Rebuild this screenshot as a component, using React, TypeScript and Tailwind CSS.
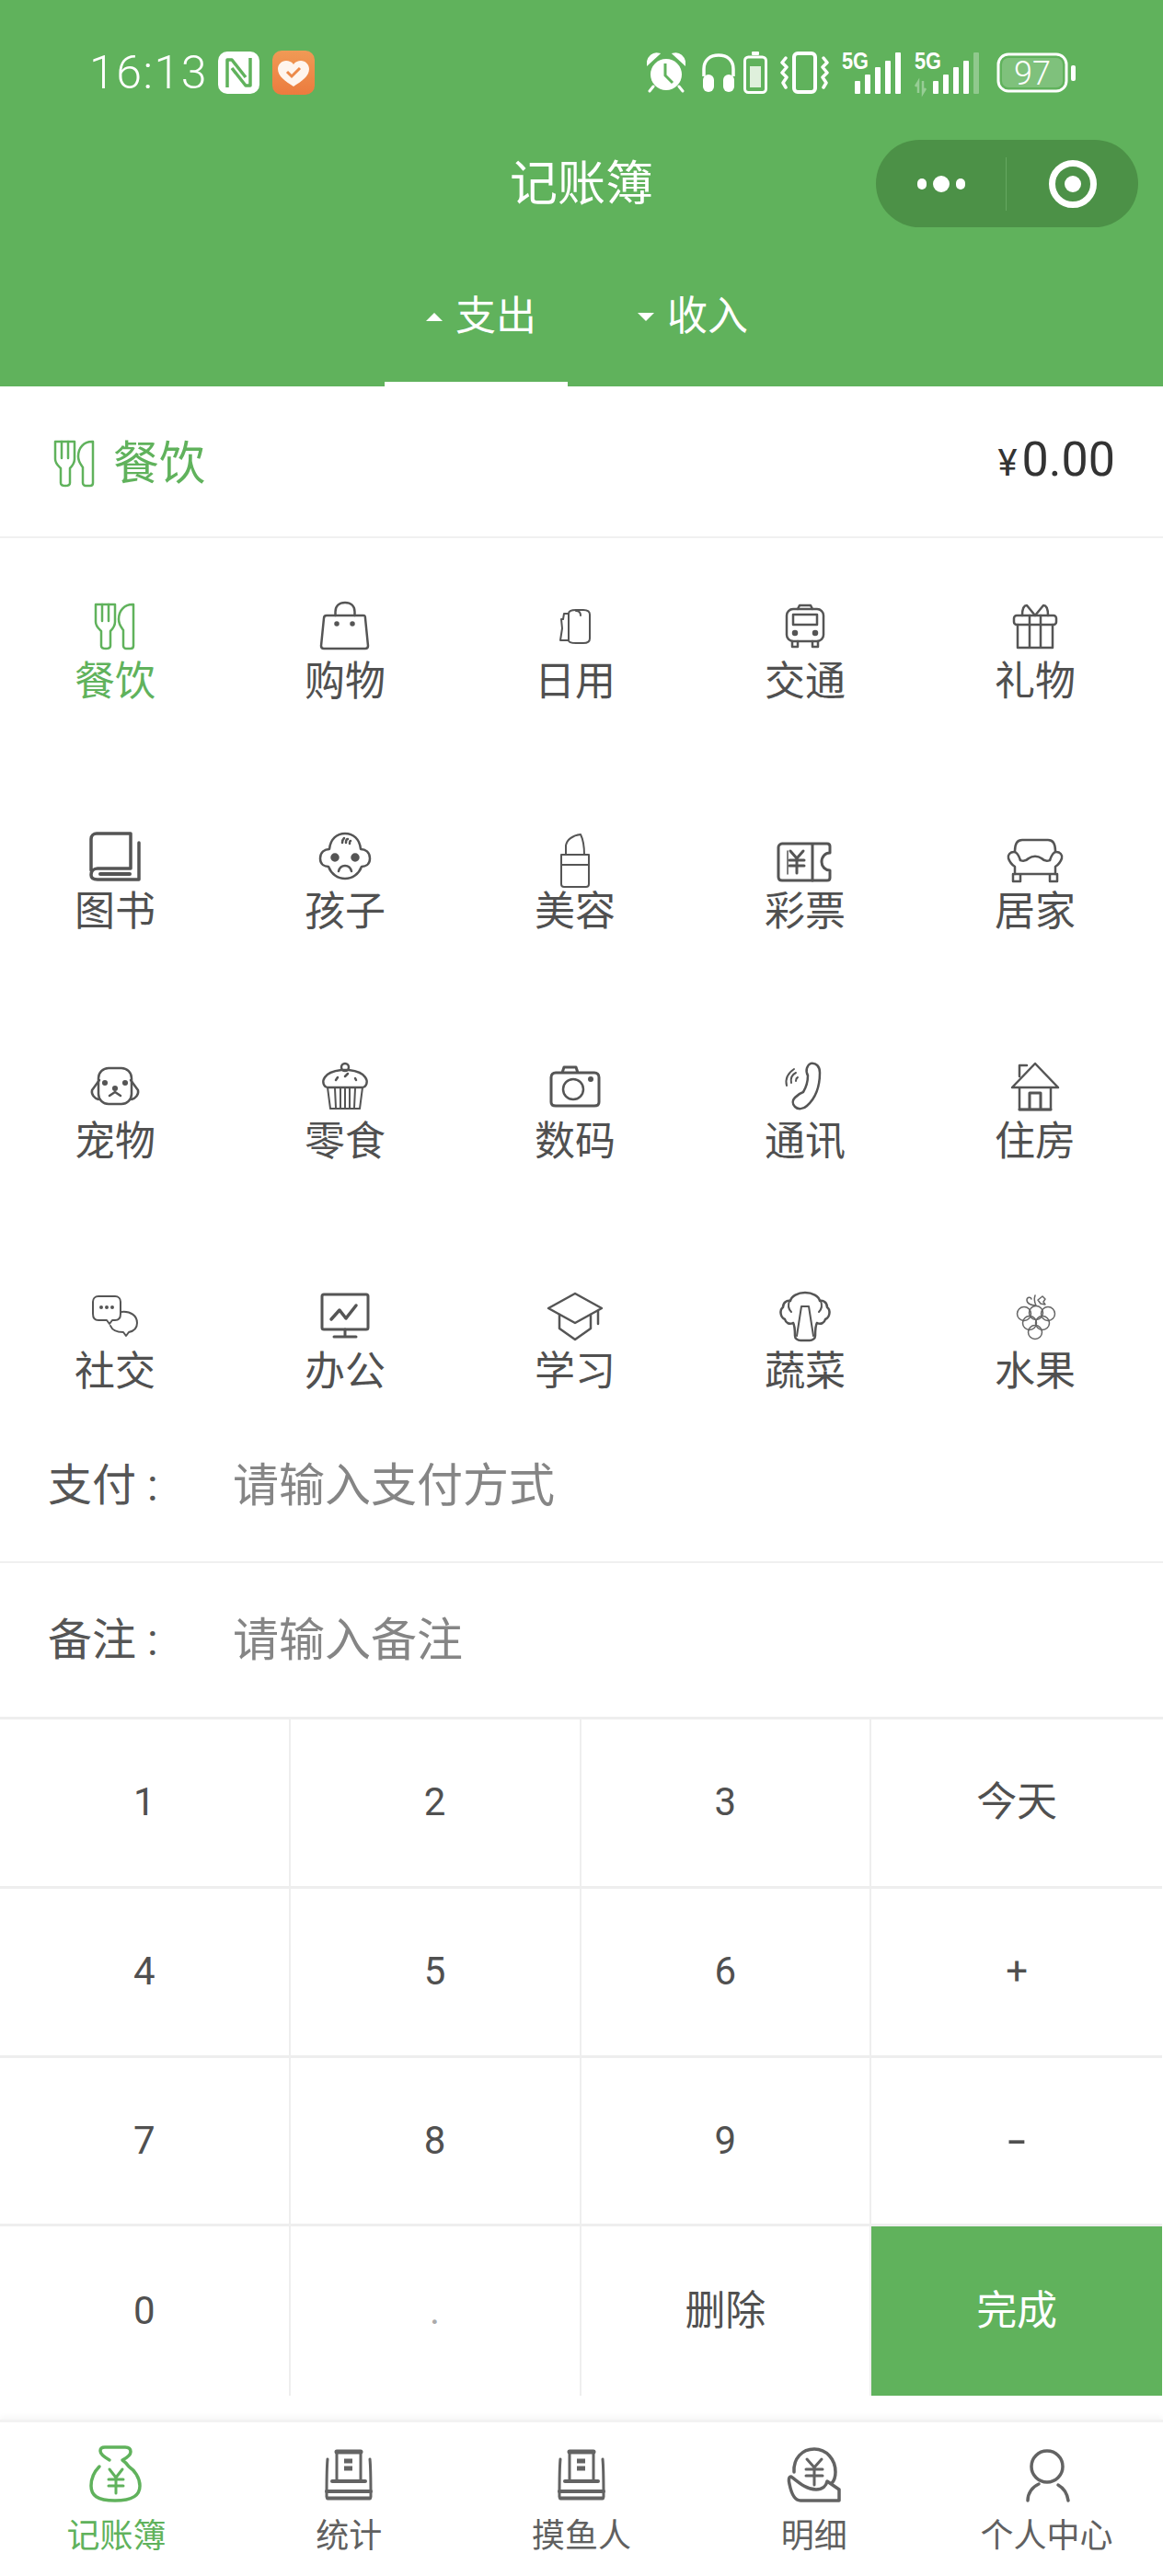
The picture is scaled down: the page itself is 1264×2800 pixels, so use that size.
import React from "react";

const G = "#60b25c";
type IP = { c?: string };
const Svg = ({ c = "#555", w = 60, h = 52, sw = 2.5, vb, children }: any) => (
  <svg width={w} height={h} viewBox={vb || `0 0 ${w} ${h}`} fill="none" stroke={c} strokeWidth={sw} strokeLinecap="round" strokeLinejoin="round" className="block overflow-visible">
    {children}
  </svg>
);

const Fork = ({ c = "#555" }: IP) => (
  <Svg c={c}>
    <path d="M9 2h21v19c0 5-3 8-5 10v16c0 2-2 3-5 3s-5-1-5-3V31c-2-2-6-5-6-10z" />
    <path d="M16 2v18M23 2v18" />
    <path d="M50 2h-1c-9 0-15 7-15 16 0 6 3 9 5 12v17c0 2 2 3 3 3h5c2 0 3-1 3-3z" />
  </Svg>
);
const Bag = () => (
  <Svg>
    <path d="M10 14h40c2 0 2 1 2 3l3 30c0 2-1 3-3 3H7c-2 0-3-1-3-3l3-30c0-2 1-3 3-3z" />
    <path d="M19.500 14V10c0-6 4-10 10.500-10s10.500 4 10.500 10v4" />
    <circle cx="21" cy="23" r="1.500" fill="#555" /><circle cx="38" cy="23" r="1.500" fill="#555" />
  </Svg>
);
const Roll = () => (
  <Svg sw={2}>
    <path d="M23 12c0-3 3-4 8-4h8c5 0 7 2 7 5v26c0 3-2 5-7 5h-8c-5 0-8-1-8-3V12zM23 12h-5l-1 6h-2l1 10-2 13h9" />
    <path d="M31 9c3 0 5 2 5 5" />
  </Svg>
);
const Bus = () => (
  <Svg sw={2.500}>
    <path d="M22 7l2-4h12l2 4M16 42v6h6v-6M38 42v6h6v-6" />
    <rect x="10" y="7" width="40" height="35" rx="7" />
    <rect x="17" y="13" width="26" height="11" />
    <circle cx="19" cy="33" r="2" fill="#555" /><circle cx="41" cy="33" r="2" fill="#555" />
  </Svg>
);
const Gift = () => (
  <Svg sw={2.500}>
    <rect x="7" y="14" width="46" height="10" rx="3" />
    <path d="M11 24v25h38V24M24 14v35M36 14v35M30 14L21 3c-3 0-5 3-5 11M30 14l9-11c3 0 5 3 5 11" />
  </Svg>
);
const Book = () => (
  <Svg sw={3.500}>
    <path d="M4 41V7c0-4 3-6 6-6h37v38H11c-4 0-7 3-7 7s3 5 7 5h45V11" />
    <path d="M14 45h32" strokeWidth={4} />
  </Svg>
);
const Baby = () => (
  <Svg sw={2.500}>
    <path d="M13 18C14 7 21 1 30 1s16 6 17 17c5 0 10 3 10 10s-5 9-9 9c-3 8-10 13-18 13s-15-5-18-13c-4 0-9-2-9-9s5-10 10-10z" />
    <circle cx="19" cy="27" r="3.500" fill="#555" /><circle cx="41" cy="27" r="3.500" fill="#555" />
    <path d="M23 42c1-4 4-6 7-6s6 2 7 6M27 11c0-3 1-4 2-5M31 11c0-3 1-4 2-4M35 12c0-2 0-3 1-3" />
  </Svg>
);
const Lip = () => (
  <Svg sw={2}>
    <path d="M20 24V14C21 8 27 3 36 2c3 6 4 15 4 22M15 24h30v11H15zM15 35v21c0 2 1 3 3 3h24c2 0 3-1 3-3V35" />
  </Svg>
);
const Ticket = () => (
  <Svg sw={3}>
    <path d="M5 12h49c2 0 3 1 3 3v7c-5 0-9 4-9 10 0 5 4 9 9 9v8c0 2-1 3-3 3H5c-2 0-4-1-4-4V16c0-2 2-4 4-4z" />
    <path d="M38 13v39" />
    <path d="M11 20v25" strokeWidth={1.500} />
    <path d="M14 20l7 8 7-8M13 30h16M13 36h16M21 28v16" />
  </Svg>
);
const Sofa = () => (
  <Svg>
    <path d="M8 20C8 12 11 8 16 8h28c5 0 8 4 8 12" />
    <path d="M14 30c-2-6-4-9-7-9-4 0-7 3-6 7 1 3 4 7 7 9v8M46 30c2-6 4-9 7-9 4 0 7 3 6 7-1 3-4 7-7 9v8" />
    <path d="M14 30c4 2 7 0 9-2 4-3 10-3 14 0 2 2 5 4 9 2" />
    <path d="M8 45h44M6 45v8h8v-8M46 45v8h8v-8" />
  </Svg>
);
const Dog = () => (
  <Svg>
    <rect x="12" y="6" width="36" height="39" rx="11" />
    <path d="M13 19L5 30c-1 5 3 9 7 10M47 19l8 11c1 5-3 9-7 10" />
    <circle cx="19" cy="22" r="1.800" fill="#555" /><circle cx="41" cy="22" r="1.800" fill="#555" /><circle cx="30" cy="28" r="1.800" fill="#555" />
    <path d="M24 36l6-4 6 4" />
  </Svg>
);
const Cup = () => (
  <Svg>
    <circle cx="30" cy="5" r="4" />
    <path d="M12 27c-6 0-7-7-4-11 3-5 10-7 18-8h8c8 1 15 3 18 8 3 4 2 11-4 11z" />
    <path d="M11 27l3 23h32l3-23M19 28l1 21M25 28v21M30 28v21M35 28v21M41 28l-1 21" strokeWidth={2} />
    <path d="M22 16l-2 3M33 12l-3 3M41 17l1 2" />
  </Svg>
);
const Cam = () => (
  <Svg sw={3}>
    <path d="M9 11h42c3 0 5 2 5 5v27c0 3-2 4-5 4H9c-3 0-5-1-5-4V16c0-3 2-5 5-5zM16 11l2-6h13l2 6" />
    <circle cx="28" cy="29" r="11" strokeWidth={2.500} />
    <circle cx="47" cy="18" r="1.500" fill="#555" />
  </Svg>
);
const Phone = () => (
  <Svg>
    <path d="M36 1c6-1 10 3 10 10 0 15-5 28-14 36-4 4-10 4-13 1-3-3-3-7 0-10 3-3 6-5 9-6 3-5 5-12 5-18-3-5-1-11 3-13z" />
    <path d="M15 22c-1-5 1-9 5-11M10 25c-2-8 2-14 8-18M20 20c0-2 0-3 2-4" strokeWidth={2} />
  </Svg>
);
const House = () => (
  <Svg sw={3}>
    <path d="M5 27L30 1l25 26zM13 27v24h34V27M13 15V3h8" strokeWidth={2.500} />
    <path d="M24 51V33h12v18M13 51h34" strokeWidth={3} />
  </Svg>
);
const Chat = () => (
  <Svg sw={2}>
    <path d="M12 4h18c4 0 6 3 6 6v13c0 4-2 7-6 7h-3l-3 4-3-4h-9c-4 0-6-3-6-7V10c0-3 2-6 6-6z" />
    <path d="M37 21c10-1 17 4 17 12 0 6-4 9-9 10l-3 4-3-4c-6 0-12-2-14-7" />
    <circle cx="15" cy="16" r="1" fill="#555" /><circle cx="21" cy="16" r="1" fill="#555" /><circle cx="27" cy="16" r="1" fill="#555" />
  </Svg>
);
const Board = () => (
  <Svg sw={3}>
    <rect x="5" y="2" width="50" height="38" rx="2" />
    <path d="M30 40v7M18 48h24" />
    <path d="M15 29l9-10 7 9 11-14" strokeWidth={3.500} />
  </Svg>
);
const Capi = () => (
  <Svg>
    <path d="M30 1l29 16-29 16L1 17z" strokeWidth={2.500} />
    <path d="M13 24v15l17 12 17-12V24M55 20v14" strokeWidth={2.500} />
  </Svg>
);
const Veg = () => (
  <Svg>
    <path d="M17 33c-4 2-8 0-9-4-5-2-6-10-2-13 0-5 4-8 8-7 1-5 8-9 16-9s15 4 16 9c4-1 8 2 8 7 4 3 3 11-2 13-1 4-5 6-9 4" />
    <path d="M17 33c2 3 2 8 2 14 0 3 3 5 6 5h10c3 0 6-2 6-5 0-6 0-11 2-14" />
    <path d="M13 9c-2 5-1 9 2 12M47 9c2 5 1 9-2 12M21 47l5-32h8l5 32" strokeWidth={2} />
  </Svg>
);
const Grape = () => (
  <Svg c="#666" sw={1.500}>
    <circle cx="18" cy="23" r="7.500" /><circle cx="31" cy="22" r="7.500" /><circle cx="44" cy="23" r="7.500" />
    <circle cx="24" cy="33" r="7.500" /><circle cx="38" cy="33" r="7.500" /><circle cx="30" cy="43" r="7.500" />
    <path d="M31 14c-2-4-2-8-1-11M31 14c-5 0-10-2-10-6 0-3 4-4 5-1M33 8l5-4 3 3-2 3 2 3-5-1z" />
  </Svg>
);
const Bagm = ({ c = "#555" }: IP) => (
  <Svg c={c} h={60} sw={3.500}>
    <path d="M23 15C16 11 13 8 13 5c0-3 2-4 5-4h22c4 0 6 2 6 5 0 3-3 6-9 9 3 2 5 4 7 7 6 4 12 12 12 21 0 10-7 16-27 16S3 53 3 43c0-8 4-16 9-21" />
    <path d="M23 25l7 9 7-9M22 36h16M22 43h16M30 34v17" strokeWidth={3} />
  </Svg>
);
const Ledger = () => (
  <Svg c="#636363" h={60} sw={3}>
    <path d="M17 37V6h26v31" />
    <path d="M17 6h26" strokeWidth={5} />
    <path d="M12 38h36" strokeWidth={4} />
    <path d="M7 14c-1 10-1 25-1 41M53 14c1 10 1 25 1 41" />
    <path d="M6 49h48" strokeWidth={4} />
    <path d="M7 56.500h46" strokeWidth={4} />
    <path d="M25 16h9M25 24h9" strokeWidth={5} strokeLinecap="butt" />
  </Svg>
);
const HandCoin = () => (
  <Svg c="#636363" h={60} sw={3.500}>
    <path d="M8 28C7 13 17 3 30 3c13 0 23 11 23 25 0 5-1 9-4 12" />
    <path d="M22 14l8 9 8-9M21 25h18M21 32h18M30 23v19" strokeWidth={3} />
    <path d="M5 33c-3 0-3 4-2 8 2 10 6 18 12 18h42V47L44 38c-1 5-5 9-12 9-10 0-17-6-27-14z" />
  </Svg>
);
const User = () => (
  <Svg c="#636363" h={60} sw={3.500}>
    <circle cx="30" cy="22" r="17" />
    <path d="M9 59c0-8 5-15 12-18M53 59c-1-7-4-13-11-17" />
  </Svg>
);

const Alarm = () => (
  <svg width="42" height="44" viewBox="0 0 42 44" className="block">
    <circle cx="21" cy="24" r="17" fill="#fff" />
    <path d="M1 12C2 5 7 1 12 2zM41 12C40 5 35 1 30 2zM7 37l-4 5M35 37l4 5" fill="#fff" stroke="#fff" strokeWidth="3" strokeLinecap="round" />
    <path d="M20 12v13l8 8" stroke={G} strokeWidth="3" fill="none" />
  </svg>
);
const Phones = () => (
  <svg width="38" height="44" viewBox="0 0 38 44" className="block" fill="none">
    <path d="M3 26V18C3 8 10 3 19 3s16 5 16 15v8" stroke="#fff" strokeWidth="3.500" />
    <rect x="2" y="24" width="12" height="19" rx="6" fill="#fff" /><rect x="24" y="24" width="12" height="19" rx="6" fill="#fff" />
  </svg>
);
const SmallBat = () => (
  <svg width="26" height="46" viewBox="0 0 26 46" className="block" fill="none">
    <rect x="9" y="0" width="8" height="4" rx="1" fill="#fff" />
    <rect x="1.500" y="6" width="23" height="38.500" rx="4" stroke="#fff" strokeWidth="3" />
    <rect x="7" y="16" width="12" height="23" fill="#dff0dc" />
  </svg>
);
const Vib = () => (
  <svg width="53" height="46" viewBox="0 0 53 46" className="block" fill="none" stroke="#fff">
    <rect x="15" y="2" width="23" height="42" rx="4" strokeWidth="4" />
    <path d="M6 7L2 12l5 5-5 6 5 5-4 6 3 5M47 7l4 5-5 5 5 6-5 5 4 6-3 5" strokeWidth="3.500" strokeLinecap="round" strokeLinejoin="round" />
  </svg>
);
const Sig = ({ w, arrows, dim }: { w: number; arrows?: boolean; dim?: boolean }) => {
  const x0 = w - 50;
  return (
    <svg width={w} height="46" viewBox={`0 0 ${w} 46`} className="block overflow-visible">
      <text x="0" y="19" fontSize="25" fontWeight="700" fill="#fff" fontFamily="Liberation Sans" textLength="29" lengthAdjust="spacingAndGlyphs">5G</text>
      {arrows && <path d="M4 45V33l-3 5M9 32v13l3-5" stroke="#fff" strokeOpacity=".35" strokeWidth="2.500" fill="none" />}
      <rect x={x0} y="32" width="6" height="14" rx="1" fill="#fff" />
      <rect x={x0 + 11} y="25" width="6" height="21" rx="1" fill="#fff" />
      <rect x={x0 + 22} y="17" width="6" height="29" rx="1" fill="#fff" />
      <rect x={x0 + 33} y="10" width="6" height="36" rx="1" fill="#fff" />
      <rect x={x0 + 44} y="1" width="6" height="45" rx="1" fill="#fff" fillOpacity={dim ? 0.3 : 1} />
    </svg>
  );
};
const Batt = () => (
  <svg width="87" height="44" viewBox="0 0 87 44" className="block overflow-visible" fill="none">
    <rect x="2" y="2" width="74" height="40" rx="11" stroke="#fff" strokeWidth="3" />
    <rect x="6" y="6" width="66" height="32" rx="7" fill="#fff" fillOpacity=".2" />
    <rect x="81" y="14" width="5" height="17" rx="2" fill="#fff" />
    <text x="39" y="35" textAnchor="middle" fontSize="36" fontWeight="300" fill="#fff" fontFamily="Roboto">97</text>
  </svg>
);

const cats: [string, React.ReactNode][] = [
  ["餐饮", <Fork c={G} />], ["购物", <Bag />], ["日用", <Roll />], ["交通", <Bus />], ["礼物", <Gift />],
  ["图书", <Book />], ["孩子", <Baby />], ["美容", <Lip />], ["彩票", <Ticket />], ["居家", <Sofa />],
  ["宠物", <Dog />], ["零食", <Cup />], ["数码", <Cam />], ["通讯", <Phone />], ["住房", <House />],
  ["社交", <Chat />], ["办公", <Board />], ["学习", <Capi />], ["蔬菜", <Veg />], ["水果", <Grape />],
];
const keys = ["1", "2", "3", "今天", "4", "5", "6", "+", "7", "8", "9", "-", "0", ".", "删除", "完成"];
const tabs: [string, React.ReactNode, boolean][] = [
  ["记账簿", <Bagm c={G} />, true], ["统计", <Ledger />, false], ["摸鱼人", <Ledger />, false], ["明细", <HandCoin />, false], ["个人中心", <User />, false],
];
const font = "font-['Roboto','Noto_Sans_CJK_SC',sans-serif]";

export default function App() {
  return (
    <div className={`w-[1264px] h-[2800px] bg-white text-[#505050] overflow-hidden flex flex-col ${font}`}>
      <header className="h-[420px] shrink-0 bg-[#60b25c] text-white flex flex-col">
        <div className="h-[152px] shrink-0 flex items-center pl-[97px] pr-[94px] pt-[6px]">
          <span className="w-[130px] text-[50px] leading-none font-light tracking-[1.5px]">16:13</span>
          <svg width="45" height="46" viewBox="0 0 45 46" className="block ml-[10px]">
            <rect width="45" height="46" rx="10" fill="#fff" />
            <path d="M10 39V9h5l15 19M35 7v30h-5L15 18" stroke={G} strokeWidth="3.500" fill="none" strokeLinejoin="round" />
          </svg>
          <svg width="46" height="48" viewBox="0 0 46 48" className="block ml-[14px]">
            <defs><linearGradient id="o" x1="0" y1="0" x2="0" y2="1"><stop offset="0" stopColor="#f09a55" /><stop offset="1" stopColor="#ec7b3e" /></linearGradient></defs>
            <rect width="46" height="48" rx="10" fill="url(#o)" />
            <path d="M23 39C14 33 6 28 6 20c0-5 4-9 9-9 3 0 6 1 8 4 2-3 5-4 8-4 5 0 9 4 9 9 0 8-8 13-17 19z" fill="#fff5ee" />
            <path d="M16 23l5 5 9-9" stroke="#ec8a4a" strokeWidth="3" fill="none" />
          </svg>
          <div className="ml-auto flex items-center">
            <Alarm />
            <div className="ml-[17px]"><Phones /></div>
            <div className="ml-[8px]"><SmallBat /></div>
            <div className="ml-[14px]"><Vib /></div>
            <div className="ml-[14px]"><Sig w={64} /></div>
            <div className="ml-[15px]"><Sig w={70} arrows dim /></div>
            <div className="ml-[19px]"><Batt /></div>
          </div>
        </div>
        <div className="h-[95px] shrink-0 relative flex items-center justify-center">
          <span className="text-[52px] leading-none pt-[3px]">记账簿</span>
          <div className="absolute right-[27px] top-0 w-[285px] h-[95px] rounded-full bg-[#4c9147] flex items-center">
            <div className="w-[142px] flex items-center justify-center gap-[7px] border-r border-[#65a760] h-[58px]">
              <span className="w-[10px] h-[12px] rounded-full bg-white" />
              <span className="w-[18px] h-[18px] rounded-full bg-white" />
              <span className="w-[10px] h-[12px] rounded-full bg-white" />
            </div>
            <div className="flex-1 flex items-center justify-center">
              <span className="w-[52px] h-[52px] rounded-full border-[7px] border-white flex items-center justify-center">
                <span className="w-[18px] h-[18px] rounded-full bg-white" />
              </span>
            </div>
          </div>
        </div>
        <div className="flex-1 flex justify-center items-end pl-[13px] gap-[31px]">
          <div className="h-[105px] w-[199px] pl-[45px] border-b-[5px] border-white flex items-center gap-[14px] pb-[42px] box-border">
            <span className="w-0 h-0 border-x-[9px] border-x-transparent border-b-[9px] border-b-white" />
            <span className="text-[44px] leading-none">支出</span>
          </div>
          <div className="h-[105px] w-[211px] pl-[45px] flex items-center gap-[14px] pb-[47px] box-border">
            <span className="w-0 h-0 border-x-[9px] border-x-transparent border-t-[9px] border-t-white" />
            <span className="text-[44px] leading-none">收入</span>
          </div>
        </div>
      </header>

      <div className="h-[165px] shrink-0 border-b-2 border-[#f0f0f0] flex items-center pl-[51px] pr-[52px] pt-[5px]">
        <Fork c={G} />
        <span className="ml-[12px] text-[50px] leading-none text-[#60b25c]">餐饮</span>
        <span className="ml-auto flex items-baseline text-[#333]">
          <span className="text-[40px] mr-[5px]">¥</span>
          <span className="text-[52px] leading-none">0.00</span>
        </span>
      </div>

      <div className="h-[948px] shrink-0 grid grid-cols-[repeat(5,250px)] grid-rows-[250px_250px_250px_198px]">
        {cats.map(([t, ic], i) => (
          <div key={t} className="flex flex-col items-center pt-[70px]">
            <div className="h-[52px]">{ic}</div>
            <div className={`mt-[9px] text-[44px] leading-[50px] ${i === 0 ? "text-[#60b25c]" : "text-[#505050]"}`}>{t}</div>
          </div>
        ))}
      </div>

      {[["支付", "请输入支付方式"], ["备注", "请输入备注"]].map(([l, p], i) => (
        <div key={l} className={`${i === 0 ? "h-[166px] border-b-2 border-[#f0f0f0]" : "h-[167px]"} shrink-0 flex items-center pl-[52px]`}>
          <span className="w-[201px] text-[48px] leading-none text-[#555]">{l}<span className="ml-[12px]">:</span></span>
          <span className="text-[50px] leading-none text-[#858585]">{p}</span>
        </div>
      ))}

      <div className="h-[738px] shrink-0 grid grid-cols-4 grid-rows-4 border-t-[3px] border-[#eeeeee] pr-[1px]">
        {keys.map((k, i) => {
          const done = k === "完成";
          const cjk = k.length > 1;
          return (
            <div key={k} className={`flex items-center justify-center ${i % 4 < 3 ? "border-r-2 border-[#eeeeee]" : ""} ${i < 12 ? "border-b-[3px] border-[#eeeeee]" : ""} ${done ? "bg-[#60b25c] text-white" : ""} ${k === "." ? "text-[#aaa]" : ""} ${cjk ? "text-[44px]" : k === "-" ? "text-[72px] font-light" : "text-[42px]"} leading-none`}>
              {k}
            </div>
          );
        })}
      </div>

      <div className="mt-[26px] flex-1 border-t-[3px] border-[#f2f2f2] shadow-[0_-3px_6px_rgba(0,0,0,0.04)] grid grid-cols-5">
        {tabs.map(([t, ic, on]) => (
          <div key={t} className="flex flex-col items-center pt-[26px]">
            {ic}
            <div className={`mt-[18px] text-[36px] leading-[40px] ${on ? "text-[#60b25c]" : "text-[#606060]"}`}>{t}</div>
          </div>
        ))}
      </div>
    </div>
  );
}
